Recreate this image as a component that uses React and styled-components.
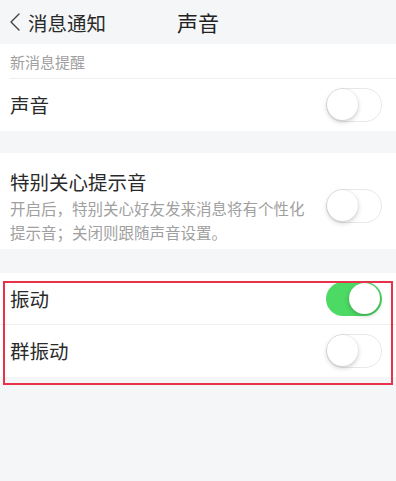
import React from 'react';
import styled, { createGlobalStyle } from 'styled-components';

const GlobalStyle = createGlobalStyle`
  html, body {
    margin: 0;
    padding: 0;
    background: #f5f6f8;
  }
  body {
    font-family: "Noto Sans CJK SC", "Noto Sans", sans-serif;
    color: #222;
    -webkit-font-smoothing: antialiased;
  }
`;

const Page = styled.div`
  width: 396px;
  min-height: 481px;
  background: #f5f6f8;
  overflow: hidden;
`;

const NavBar = styled.div`
  height: 44px;
  display: grid;
  grid-template-columns: 1fr auto 1fr;
  align-items: center;
  background: #f5f6f8;
`;

const Back = styled.div`
  display: flex;
  align-items: center;
  gap: 7px;
  padding-left: 8px;
  font-size: 19.5px;
  color: #2a2a2a;
`;

const Title = styled.div`
  font-size: 21px;
  color: #222;
`;

const Group = styled.div`
  background: #fff;
  margin-top: ${(p) => p.gap || 0}px;
  position: relative;
`;

const SectionLabel = styled.div`
  height: 34px;
  margin-left: 10px;
  display: flex;
  align-items: center;
  font-size: 15px;
  color: #a0a0a0;
  border-bottom: 1px solid #eeeff1;
`;

const Row = styled.div`
  min-height: 52px;
  display: flex;
  align-items: center;
  justify-content: space-between;
  padding: ${(p) => (p.tall ? '15px 14px 5px 10px' : '0 14px 0 10px')};
  box-sizing: border-box;
  border-bottom: ${(p) => (p.divider ? '1px solid #eeeff1' : 'none')};
`;

const RowText = styled.div`
  display: flex;
  flex-direction: column;
  padding-right: 18px;
`;

const Label = styled.div`
  font-size: 19.5px;
  line-height: 28px;
  color: #2a2a2a;
`;

const Desc = styled.div`
  font-size: 15.5px;
  line-height: 24px;
  color: #a0a0a0;
`;

const Switch = styled.div`
  flex: none;
  width: 56px;
  height: 34px;
  border-radius: 17px;
  box-sizing: border-box;
  background: ${(p) => (p.on ? '#4cd964' : '#fff')};
  border: ${(p) => (p.on ? 'none' : '1.5px solid #e8e8e8')};
  position: relative;
`;

const Knob = styled.div`
  position: absolute;
  top: ${(p) => (p.on ? '1px' : '0px')};
  left: ${(p) => (p.on ? '23px' : '0px')};
  width: 31px;
  height: 31px;
  border-radius: 50%;
  background: #fff;
  box-shadow: 0 2px 5px rgba(0, 0, 0, 0.2), 0 0 0 0.5px rgba(0, 0, 0, 0.06);
`;

const Highlight = styled.div`
  position: absolute;
  left: 3px;
  right: 3px;
  top: 8px;
  bottom: -8px;
  border: 2px solid #e8324a;
  pointer-events: none;
`;

function Toggle({ on }) {
  return (
    <Switch on={on ? 1 : 0}>
      <Knob on={on ? 1 : 0} />
    </Switch>
  );
}

export default function App() {
  return (
    <Page>
      <GlobalStyle />
      <NavBar>
        <Back>
          <svg width="13" height="20" viewBox="0 0 13 20">
            <path d="M11 2 L3 10 L11 18" fill="none" stroke="#444" strokeWidth="1.4" strokeLinecap="round" strokeLinejoin="round" />
          </svg>
          消息通知
        </Back>
        <Title>声音</Title>
        <div />
      </NavBar>

      <Group>
        <SectionLabel>新消息提醒</SectionLabel>
        <Row>
          <Label>声音</Label>
          <Toggle />
        </Row>
      </Group>

      <Group gap={22}>
        <Row tall>
          <RowText>
            <Label>特别关心提示音</Label>
            <Desc>开启后，特别关心好友发来消息将有个性化提示音；关闭则跟随声音设置。</Desc>
          </RowText>
          <Toggle />
        </Row>
      </Group>

      <Group gap={24}>
        <Row divider>
          <Label>振动</Label>
          <Toggle on />
        </Row>
        <Row>
          <Label>群振动</Label>
          <Toggle />
        </Row>
        <Highlight />
      </Group>
    </Page>
  );
}
